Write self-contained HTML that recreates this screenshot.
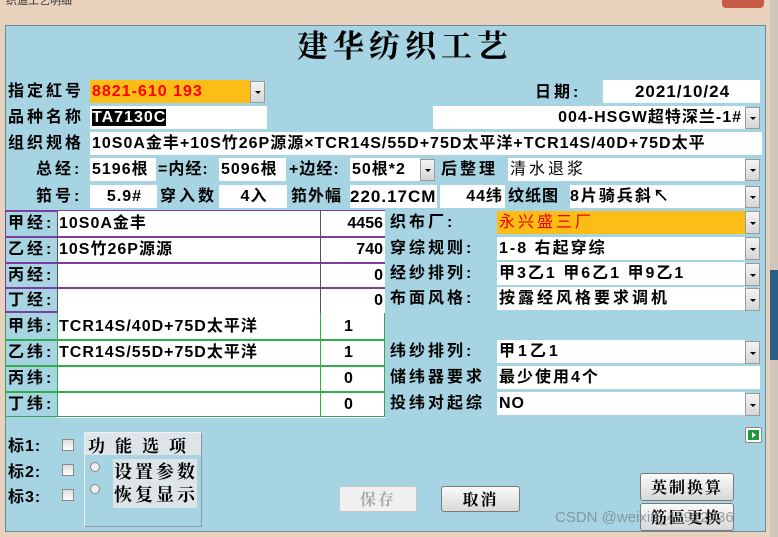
<!DOCTYPE html>
<html><head><meta charset="utf-8"><style>
*{margin:0;padding:0;box-sizing:border-box}
body{width:778px;height:537px;overflow:hidden;position:relative;background:#e9d2bd;font-family:"Liberation Sans","Noto Sans CJK SC",sans-serif;font-weight:bold;font-size:16px;color:#000}
.a{position:absolute;white-space:nowrap;line-height:1}
.panel{position:absolute;left:5px;top:25px;width:761px;height:507px;background:#a6d4e2;border:1px solid #6e8a94}
.b{position:absolute;background:#fff;white-space:nowrap;overflow:hidden;font-size:16px;line-height:23px;padding-left:2px;letter-spacing:1px}
.l{position:absolute;white-space:nowrap;font-size:16px;line-height:23px;letter-spacing:3px}
.dd{position:absolute;width:15px;background:linear-gradient(#f4f4f4,#d6d6d6);border:1px solid #9a9a9a}
.dd:after{content:"";position:absolute;left:4px;top:50%;margin-top:-1px;border-left:3px solid transparent;border-right:3px solid transparent;border-top:3px solid #000}
.row{position:absolute;left:5px;width:380px;height:26px}
.cl{position:absolute;left:0;top:0;width:52px;height:26px;line-height:25px;letter-spacing:3px;padding-left:3px;font-size:16px}
.ct{position:absolute;left:52px;top:0;width:263px;height:26px;background:#fff;line-height:25px;padding-left:2px;letter-spacing:1px}
.cn{position:absolute;left:315px;top:0;width:65px;height:26px;background:#fff;line-height:25px}
.btn{position:absolute;border:1px solid #7a7a7a;border-radius:3px;background:linear-gradient(#fafafa,#d8d8d8);text-align:center;font-family:"Noto Serif CJK SC",serif;font-size:16px;letter-spacing:2px}
.cb{position:absolute;width:12px;height:12px;border:1px solid #8a8a8a;background:linear-gradient(#ddd,#fff)}
.ser{font-family:"Noto Serif CJK SC",serif}
</style></head><body>
<div class="a" style="left:6px;top:-4px;font-size:11px;font-weight:normal;color:#333">织造工艺明细</div>
<div style="position:absolute;left:722px;top:0;width:42px;height:8px;background:#c75a45;border-radius:0 0 4px 4px"></div>
<div style="position:absolute;left:770px;top:0;width:8px;height:537px;background:#cfc6bc"></div>
<div style="position:absolute;left:770px;top:270px;width:8px;height:90px;background:#2a5e86"></div>
<div class="panel"></div>
<div class="a ser" style="left:297px;top:28px;font-size:31px;letter-spacing:5px">建华纺织工艺</div>

<div class="l" style="left:8px;top:80px">指定紅号</div>
<div class="b" style="left:90px;top:80px;width:160px;background:#fbbd16;color:#f00">8821-610 193</div>
<div class="dd" style="left:250px;top:81px;height:22px"></div>
<div class="l" style="left:535px;top:81px">日期:</div>
<div class="b" style="left:603px;top:80px;width:157px;text-align:center;font-size:17px">2021/10/24</div>

<div class="l" style="left:8px;top:106px">品种名称</div>
<div class="b" style="left:90px;top:106px;width:177px"><span style="background:#000;color:#fff">TA7130C</span></div>
<div class="b" style="left:433px;top:106px;width:312px;text-align:right;padding-right:3px">004-HSGW超特深兰-1#</div>
<div class="dd" style="left:745px;top:107px;height:22px"></div>

<div class="l" style="left:8px;top:132px">组织规格</div>
<div class="b" style="left:90px;top:132px;width:672px">10S0A金丰+10S竹26P源源×TCR14S/55D+75D太平洋+TCR14S/40D+75D太平</div>

<div class="l" style="left:36px;top:158px">总经:</div>
<div class="b" style="left:90px;top:158px;width:66px">5196根</div>
<div class="l" style="left:158px;top:158px;letter-spacing:1px">=内经:</div>
<div class="b" style="left:219px;top:158px;width:67px">5096根</div>
<div class="l" style="left:289px;top:158px;letter-spacing:1px">+边经:</div>
<div class="b" style="left:350px;top:158px;width:70px">50根*2</div>
<div class="dd" style="left:420px;top:159px;height:22px"></div>
<div class="l" style="left:441px;top:158px">后整理</div>
<div class="b" style="left:508px;top:158px;width:237px;font-weight:normal;letter-spacing:3px">清水退浆</div>
<div class="dd" style="left:745px;top:159px;height:22px"></div>

<div class="l" style="left:36px;top:185px">筘号:</div>
<div class="b" style="left:90px;top:185px;width:67px;text-align:center">5.9#</div>
<div class="l" style="left:160px;top:185px">穿入数</div>
<div class="b" style="left:219px;top:185px;width:68px;text-align:center">4入</div>
<div class="l" style="left:291px;top:185px;letter-spacing:1px">筘外幅</div>
<div class="b" style="left:350px;top:185px;width:87px;padding-left:0;font-size:17px">220.17CM</div>
<div class="b" style="left:440px;top:185px;width:65px;text-align:right;padding-right:2px">44纬</div>
<div class="l" style="left:508px;top:185px;letter-spacing:1px">纹纸图</div>
<div class="b" style="left:570px;top:185px;width:175px;letter-spacing:2px;padding-left:0">8片骑兵斜↖</div>
<div class="dd" style="left:745px;top:186px;height:22px"></div>

<div style="position:absolute;left:5px;top:210px;width:380px;height:103px;border:2px solid #7a3fa0;border-left:1px solid #7a3fa0"></div>
<div class="row" style="top:211px"><div class="cl">甲经:</div><div class="ct">10S0A金丰</div><div class="cn" style="text-align:right;padding-right:2px">4456</div></div>
<div class="row" style="top:237px"><div class="cl">乙经:</div><div class="ct">10S竹26P源源</div><div class="cn" style="text-align:right;padding-right:2px">740</div></div>
<div class="row" style="top:263px"><div class="cl">丙经:</div><div class="ct"></div><div class="cn" style="text-align:right;padding-right:2px">0</div></div>
<div class="row" style="top:288px"><div class="cl">丁经:</div><div class="ct"></div><div class="cn" style="text-align:right;padding-right:2px">0</div></div>
<div style="position:absolute;left:5px;top:236px;width:380px;height:2px;background:#7a3fa0"></div>
<div style="position:absolute;left:5px;top:262px;width:380px;height:2px;background:#7a3fa0"></div>
<div style="position:absolute;left:5px;top:287px;width:380px;height:2px;background:#7a3fa0"></div>
<div style="position:absolute;left:57px;top:211px;width:1px;height:102px;background:#555"></div>
<div style="position:absolute;left:320px;top:211px;width:1px;height:102px;background:#555"></div>

<div class="row" style="top:314px"><div class="cl">甲纬:</div><div class="ct">TCR14S/40D+75D太平洋</div><div class="cn" style="text-align:center;padding-right:8px">1</div></div>
<div class="row" style="top:340px"><div class="cl">乙纬:</div><div class="ct">TCR14S/55D+75D太平洋</div><div class="cn" style="text-align:center;padding-right:8px">1</div></div>
<div class="row" style="top:366px"><div class="cl">丙纬:</div><div class="ct"></div><div class="cn" style="text-align:center;padding-right:8px">0</div></div>
<div class="row" style="top:392px"><div class="cl">丁纬:</div><div class="ct"></div><div class="cn" style="text-align:center;padding-right:8px">0</div></div>
<div style="position:absolute;left:5px;top:313px;width:380px;height:104px;border:1px solid #3aa55a;border-top:none"></div>
<div style="position:absolute;left:5px;top:339px;width:380px;height:2px;background:#2fae4a"></div>
<div style="position:absolute;left:5px;top:365px;width:380px;height:2px;background:#2fae4a"></div>
<div style="position:absolute;left:5px;top:391px;width:380px;height:2px;background:#2fae4a"></div>
<div style="position:absolute;left:57px;top:313px;width:1px;height:104px;background:#2fae4a"></div>
<div style="position:absolute;left:320px;top:313px;width:1px;height:104px;background:#2fae4a"></div>

<div class="l" style="left:390px;top:211px">织布厂:</div>
<div class="b" style="left:497px;top:211px;width:248px;background:#fbbd16;color:#e00;font-weight:normal;letter-spacing:3px">永兴盛三厂</div>
<div class="dd" style="left:745px;top:211px;height:23px"></div>
<div class="l" style="left:390px;top:237px">穿综规则:</div>
<div class="b" style="left:497px;top:237px;width:248px;letter-spacing:2px">1-8 右起穿综</div>
<div class="dd" style="left:745px;top:237px;height:23px"></div>
<div class="l" style="left:390px;top:262px">经纱排列:</div>
<div class="b" style="left:497px;top:262px;width:248px;letter-spacing:2px">甲3乙1 甲6乙1 甲9乙1</div>
<div class="dd" style="left:745px;top:263px;height:23px"></div>
<div class="l" style="left:390px;top:287px">布面风格:</div>
<div class="b" style="left:497px;top:287px;width:248px;letter-spacing:3px">按露经风格要求调机</div>
<div class="dd" style="left:745px;top:288px;height:23px"></div>
<div class="l" style="left:390px;top:340px">纬纱排列:</div>
<div class="b" style="left:497px;top:340px;width:248px;letter-spacing:3px">甲1乙1</div>
<div class="dd" style="left:745px;top:341px;height:23px"></div>
<div class="l" style="left:390px;top:366px">储纬器要求</div>
<div class="b" style="left:497px;top:366px;width:263px;letter-spacing:2px">最少使用4个</div>
<div class="l" style="left:390px;top:392px">投纬对起综</div>
<div class="b" style="left:497px;top:392px;width:248px">NO</div>
<div class="dd" style="left:745px;top:393px;height:23px"></div>

<div class="l" style="left:8px;top:435px;letter-spacing:1px">标1:</div>
<div class="l" style="left:8px;top:461px;letter-spacing:1px">标2:</div>
<div class="l" style="left:8px;top:486px;letter-spacing:1px">标3:</div>
<div class="cb" style="left:62px;top:439px"></div>
<div class="cb" style="left:62px;top:464px"></div>
<div class="cb" style="left:62px;top:489px"></div>
<div style="position:absolute;left:84px;top:432px;width:118px;height:95px;border:1px solid;border-color:#eef #8a9aa0 #8a9aa0 #eef;background:#a6d4e2"></div>
<div style="position:absolute;left:85px;top:433px;width:116px;height:22px;background:#dde5e8"></div>
<div class="a ser" style="left:88px;top:435px;font-size:17px;line-height:20px;letter-spacing:10px">功能选项</div>
<div style="position:absolute;left:90px;top:462px;width:10px;height:10px;border-radius:50%;border:1px solid #888;background:#eee"></div>
<div style="position:absolute;left:90px;top:484px;width:10px;height:10px;border-radius:50%;border:1px solid #888;background:#eee"></div>
<div style="position:absolute;left:113px;top:459px;width:84px;height:49px;background:#dde5e8"></div>
<div class="a ser" style="left:114px;top:460px;font-size:18px;line-height:22px;letter-spacing:3px">设置参数</div>
<div class="a ser" style="left:114px;top:483px;font-size:18px;line-height:22px;letter-spacing:3px">恢复显示</div>

<div class="btn" style="left:339px;top:486px;width:78px;height:26px;line-height:24px;color:#aaa;border-color:#c8c8c8;background:#f0f0f0">保存</div>
<div class="btn" style="left:441px;top:486px;width:79px;height:26px;line-height:24px">取消</div>
<div class="btn" style="left:640px;top:473px;width:94px;height:28px;line-height:26px">英制换算</div>
<div class="btn" style="left:640px;top:503px;width:94px;height:28px;line-height:26px">筋區更换</div>
<div style="position:absolute;left:745px;top:427px;width:17px;height:16px;border:1px solid #888;border-radius:2px;background:#fff"><div style="position:absolute;left:2px;top:2px;width:11px;height:10px;background:#1f9a3a"></div><div style="position:absolute;left:6px;top:4px;border-top:3px solid transparent;border-bottom:3px solid transparent;border-left:4px solid #fff"></div></div>
<div class="a" style="left:555px;top:510px;font-size:15px;font-weight:normal;color:rgba(120,130,135,0.75);font-family:'Liberation Sans',sans-serif">CSDN @weixin_42912336</div>
</body></html>
